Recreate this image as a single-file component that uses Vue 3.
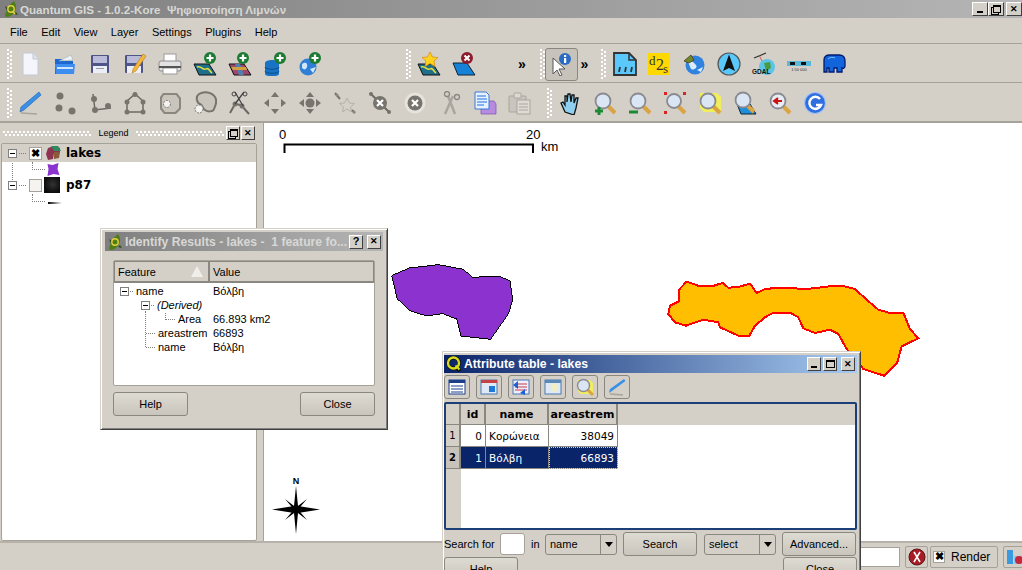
<script setup>
const rows = [
  { n: 1, id: 0, name: "Κορώνεια", area: 38049 },
  { n: 2, id: 1, name: "Βόλβη", area: 66893, selected: true },
];
const menus = ["File", "Edit", "View", "Layer", "Settings", "Plugins", "Help"];
</script>

<template>
  <div class="app">
    <div class="titlebar">
      <svg class="logo" width="16" height="16" viewBox="0 0 16 16">
        <path d="M11 0c2 3 3 6 1 10s-5 6-9 6c-2-2 0-4 1-7s3-6 7-9z" fill="#4f7d18" />
        <path d="M2 5l3 2-1 3zM13 11l2 3-4-1z" fill="#2c4a10" />
        <circle cx="8" cy="8" r="3.200" fill="none" stroke="#e6d23c" stroke-width="1.400" />
        <path d="M9.500 10l2.500 3" stroke="#e6d23c" stroke-width="1.400" />
      </svg>
      <span class="title-text">Quantum GIS - 1.0.2-Kore &nbsp;Ψηφιοποίηση Λιμνών</span>
      <div class="win-btns">
        <button class="win-btn"><i class="min"></i></button>
        <button class="win-btn"><i class="rest"></i></button>
        <button class="win-btn x">✕</button>
      </div>
    </div>

    <div class="menubar">
      <span v-for="m in menus" :key="m" class="menu">{{ m }}</span>
    </div>

    <div class="toolbar">
      <span class="grip"></span>
      <div class="tb"><svg viewBox="0 0 24 24"><path d="M5 1h10l5 6v16H5z" fill="#f4f6fb" stroke="#c2c8d8" /><path d="M15 1v6h5" fill="#dfe3ee" stroke="#c2c8d8" /></svg></div>
      <div class="tb"><svg viewBox="0 0 24 24"><path d="M2 7h7l2 2h9v13H2z" fill="#1e66d0" /><path d="M6 9l12-6 2 5z" fill="#eef2f8" stroke="#8aa" stroke-width=".5" /><path d="M2 12h20l-1 10H3z" fill="#3d8df0" /><rect x="4" y="15" width="16" height="2" fill="#cfe4ff" /></svg></div>
      <div class="tb"><svg viewBox="0 0 24 24"><rect x="3" y="3" width="18" height="18" rx="1" fill="#4f5488" /><rect x="5" y="4" width="14" height="7" fill="#b9bbd8" /><rect x="5" y="14" width="14" height="7" fill="#eceef6" /><rect x="8" y="16" width="8" height="1" fill="#99a" /></svg></div>
      <div class="tb"><svg viewBox="0 0 24 24"><rect x="2" y="3" width="18" height="18" rx="1" fill="#4f5488" /><rect x="4" y="4" width="14" height="7" fill="#b9bbd8" /><rect x="4" y="14" width="14" height="7" fill="#eceef6" /><path d="M10 17L20 2l3 2-10 15-4 2z" fill="#f5b63c" stroke="#a86f10" stroke-width=".5" /></svg></div>
      <div class="tb"><svg viewBox="0 0 24 24"><rect x="6" y="2" width="12" height="8" fill="#fff" stroke="#999" /><rect x="1" y="9" width="22" height="10" rx="2" fill="#e2e2e2" stroke="#8d8d8d" /><rect x="5" y="16" width="14" height="6" fill="#fff" stroke="#999" /><rect x="1" y="14" width="22" height="2" fill="#555" /></svg></div>
      <div class="tb"><svg viewBox="0 0 24 24"><path d="M1 12h15l7 11H6z" fill="#1f6f8b" stroke="#111" /><path d="M4 15c4-2 6 4 9 2s3 2 6 4" fill="none" stroke="#e8e23a" stroke-width="1.500" /><circle cx="17" cy="6" r="6" fill="#1c7a32" /><path d="M17 2.500v7M13.500 6h7" stroke="#fff" stroke-width="2.200" /></svg></div>
      <div class="tb"><svg viewBox="0 0 24 24"><path d="M1 12h15l7 11H6z" fill="#a0466a" stroke="#111" /><path d="M7 12l4 11h5l-4-11z" fill="#4f7fb0" /><path d="M3 15h15l1 3H5z" fill="#d2a03c" /><circle cx="15" cy="6" r="6" fill="#1c7a32" /><path d="M15 2.500v7M11.500 6h7" stroke="#fff" stroke-width="2.200" /></svg></div>
      <div class="tb"><svg viewBox="0 0 24 24"><path d="M2 11c0-4 14-4 14 0v11c0 3-14 3-14 0z" fill="#1873c4" /><path d="M2 15c0 3 14 3 14 0M2 19c0 3 14 3 14 0" fill="none" stroke="#0d4c88" /><circle cx="17" cy="6" r="6" fill="#1c7a32" /><path d="M17 2.500v7M13.500 6h7" stroke="#fff" stroke-width="2.200" /></svg></div>
      <div class="tb"><svg viewBox="0 0 24 24"><circle cx="10" cy="15" r="8.500" fill="#2f7fd6" /><path d="M4 12c4-3 6 0 5 3s-3 3-5 1zM12 17l6-2-3 6z" fill="#cfe6fb" /><circle cx="17" cy="6" r="6" fill="#1c7a32" /><path d="M17 2.500v7M13.500 6h7" stroke="#fff" stroke-width="2.200" /></svg></div>

      <span class="grip g1"></span>
      <div class="tb"><svg viewBox="0 0 24 24"><path d="M1 12h15l7 11H6z" fill="#1f6f8b" stroke="#111" /><path d="M4 15c4-2 6 4 9 2s3 2 6 4" fill="none" stroke="#e8e23a" stroke-width="1.500" /><path d="M13 0l2.500 5 5.500.5-4 3.500 1 5.500-5-3-5 3 1-5.500-4-3.500 5.500-.5z" fill="#ffd21e" stroke="#d9860a" stroke-width=".7" /></svg></div>
      <div class="tb"><svg viewBox="0 0 24 24"><path d="M1 11h14l8 12H6z" fill="#1582d8" stroke="#123" /><circle cx="15" cy="6" r="6" fill="#8c1c2c" /><path d="M12.500 3.500l5 5M17.500 3.500l-5 5" stroke="#fff" stroke-width="2" /></svg></div>
      <span class="more m1">»</span>
      <span class="grip g2"></span>
      <div class="tb active"><svg viewBox="0 0 24 24"><path d="M4 6v16l4-4 3 6 2-1-3-6h6z" fill="#fff" stroke="#555" /><circle cx="16" cy="7" r="6" fill="#2a6cc4" /><rect x="15" y="6" width="2.200" height="5" fill="#fff" /><rect x="15" y="3" width="2.200" height="2" fill="#fff" /></svg></div>
      <span class="more m2">»</span>
      <span class="grip g3"></span>
      <div class="tb"><svg viewBox="0 0 24 24"><path d="M1 1h15l7 7v15H1z" fill="#5ac8fa" stroke="#333" stroke-width="1.800" /><path d="M16 1v7h7" fill="none" stroke="#333" stroke-width="1.500" /><path d="M6 20l1-5M12 20l1-5M18 20l1-5" stroke="#333" stroke-width="1.800" /></svg></div>
      <div class="tb d2s"><span class="d">d</span><span class="two">2</span><span class="s">s</span></div>
      <div class="tb"><svg viewBox="0 0 24 24"><circle cx="13" cy="13" r="9.500" fill="#2f82e0" /><path d="M6 10c4-2 6 1 8 3s-2 6-5 4zM15 18l6-3-2 5z" fill="#d8ecfb" /><path d="M2 9l7-6 3 5-5 3z" fill="#6a8a2c" stroke="#5a3510" stroke-width=".8" /></svg></div>
      <div class="tb"><svg viewBox="0 0 24 24"><circle cx="12" cy="12" r="11" fill="#5ac8fa" stroke="#555" stroke-width="1.200" /><path d="M12 2.500L18 19l-6-3-6 3z" fill="#111" /></svg></div>
      <div class="tb"><svg viewBox="0 0 24 24"><circle cx="15" cy="15" r="8" fill="#5cc4e6" /><path d="M12 11l6-1 1 6-5 3z" fill="#4a9a44" /><path d="M2 6l12-5" stroke="#333" stroke-width="1.300" /><path d="M7 3l3 6" stroke="#c44" stroke-width=".8" /><text x="0" y="22" class="gdal">GDAL</text></svg></div>
      <div class="tb"><svg viewBox="0 0 24 24"><rect x="0" y="9" width="24" height="5" fill="#5cb8d8" /><rect x="3" y="10" width="5" height="3" fill="#111" /><rect x="14" y="10" width="5" height="3" fill="#111" /><text x="12" y="19" class="scale-mini">1:50 000</text></svg></div>
      <div class="tb"><svg viewBox="0 0 24 24"><path d="M2 20V8c0-4 3-5 6-5h9c4 0 6 2 6 6v5c0 2-2 3-3 2v4h-5v-4h-3v4H7v-4H5v4z" fill="#1264dc" stroke="#001a70" stroke-width="1.300" /><path d="M6 7c2-2 5-2 7-1" stroke="#7fc0ff" fill="none" /></svg></div>
    </div>

    <div class="toolbar second">
      <span class="grip"></span>
      <div class="tb"><svg viewBox="0 0 24 24"><path d="M21 1l2 3L6 19l-4 2 1-5z" fill="#3a8fe6" stroke="#1e5fb0" stroke-width=".6" /><path d="M3 22l16 1" stroke="#a8a49c" stroke-width="1.500" /></svg></div>
      <div class="tb dim"><svg viewBox="0 0 24 24"><circle cx="7" cy="5" r="3.500" /><circle cx="6" cy="17" r="3.500" /><circle cx="19" cy="20" r="3.500" /></svg></div>
      <div class="tb dim"><svg viewBox="0 0 24 24"><path d="M5 3l2 16 16-2" fill="none" stroke="#6b6963" stroke-width="1.500" /><circle cx="6" cy="8" r="3" /><circle cx="7" cy="19" r="3" /><circle cx="20" cy="15" r="3" /></svg></div>
      <div class="tb dim"><svg viewBox="0 0 24 24"><path d="M4 10l8-7 8 7v11H4z" fill="none" stroke="#6b6963" stroke-width="1.500" /><circle cx="12" cy="3.500" r="2.500" /><circle cx="4" cy="11" r="2.500" /><circle cx="20" cy="11" r="2.500" /><circle cx="4" cy="21" r="2.500" /><circle cx="20" cy="21" r="2.500" /></svg></div>
      <div class="tb dim"><svg viewBox="0 0 24 24"><path d="M5 2h14l4 5v11l-5 5H6l-4-5V6z" fill="#8a8780" /><path d="M6 4h12l3 4v9l-4 4H7l-3-4V7z" fill="#c9c5bd" /><circle cx="9" cy="13" r="3.500" fill="#f4f2ee" stroke="#777" stroke-dasharray="2 1" /></svg></div>
      <div class="tb dim"><svg viewBox="0 0 24 24"><path d="M6 3c5-3 13-2 16 3s0 9-1 12-6 3-9 1-2-5-5-6-5-7-1-10z" fill="#c9c5bd" stroke="#77746d" stroke-width="2" /><circle cx="6" cy="18" r="4" fill="#f4f2ee" stroke="#777" stroke-dasharray="2 1" /></svg></div>
      <div class="tb dim"><svg viewBox="0 0 24 24"><path d="M2 22l5-9 6 1 8 9" fill="none" stroke="#6b6963" stroke-width="2" /><circle cx="7" cy="13" r="2.500" /><circle cx="14" cy="15" r="2.500" /><path d="M7 1l8 14M16 1l-9 12" stroke="#444" stroke-width="1.300" /><circle cx="6" cy="3" r="2" fill="none" stroke="#444" /><circle cx="17" cy="3" r="2" fill="none" stroke="#444" /></svg></div>
      <div class="tb dim"><svg viewBox="0 0 24 24"><path d="M12 1l4 5H8zM12 23l4-5H8zM1 12l5-4v8zM23 12l-5-4v8z" /></svg></div>
      <div class="tb dim"><svg viewBox="0 0 24 24"><circle cx="12" cy="12" r="4.500" /><path d="M12 1l4 5H8zM12 23l4-5H8zM1 12l5-4v8zM23 12l-5-4v8z" /></svg></div>
      <div class="tb dim faint"><svg viewBox="0 0 24 24"><path d="M14 7l2.500 5 5 .5-4 3.500 1 5-4.500-3-4.500 3 1-5-4-3.500 5-.5z" fill="none" stroke="#b5b1a8" /><path d="M2 2l5 6M19 19l3 3" stroke="#77746d" stroke-width="2" /><circle cx="4" cy="4" r="1.500" /><circle cx="21" cy="21" r="1.500" /></svg></div>
      <div class="tb dim"><svg viewBox="0 0 24 24"><path d="M2 2l20 20" stroke="#6b6963" stroke-width="2" /><circle cx="3" cy="3" r="2" /><circle cx="21" cy="21" r="2" /><circle cx="12" cy="12" r="7" /><path d="M9 9l6 6M15 9l-6 6" stroke="#fff" stroke-width="2.200" /></svg></div>
      <div class="tb dim"><svg viewBox="0 0 24 24"><circle cx="12" cy="12" r="10.500" fill="#e6e3dc" /><circle cx="12" cy="12" r="7.500" /><path d="M9 9l6 6M15 9l-6 6" stroke="#fff" stroke-width="2.200" /></svg></div>
      <div class="tb dim"><svg viewBox="0 0 24 24"><path d="M7 23l8-18M17 23L10 5" stroke="#a9a69f" stroke-width="2.500" /><circle cx="9" cy="3" r="2.500" fill="none" stroke="#8a8780" stroke-width="1.300" /><circle cx="19" cy="6" r="2.500" fill="none" stroke="#8a8780" stroke-width="1.300" /></svg></div>
      <div class="tb"><svg viewBox="0 0 24 24"><path d="M8 10h13l2 3v10H8z" fill="#b78be0" stroke="#7b4fb0" stroke-width=".7" /><path d="M2 1h11l3 3v14H2z" fill="#e8f2ff" stroke="#3a78d0" /><path d="M4 5h9M4 8h10M4 11h10M4 14h7" stroke="#1e6ee0" /></svg></div>
      <div class="tb dim"><svg viewBox="0 0 24 24"><rect x="1" y="5" width="17" height="16" rx="1" fill="#c9c5bd" stroke="#a9a69f" /><rect x="6" y="2" width="7" height="5" rx="1" fill="#dcd9d2" stroke="#a9a69f" /><rect x="9" y="9" width="13" height="14" fill="#dedbd4" stroke="#a9a69f" /><path d="M11 13h9M11 16h9M11 19h9" stroke="#a9a69f" /></svg></div>
      <span class="grip g4"></span>
      <div class="tb"><svg viewBox="0 0 24 24"><path d="M7 21l-4-9 2-1 2 3V5h2v6l1-8h2l1 8 1-7h2l0 8 2-5h2l-2 10-2 7z" fill="#8fd0f0" stroke="#111" stroke-width="1.300" /></svg></div>
      <div class="tb"><svg viewBox="0 0 24 24"><path d="M15 15l7 7" stroke="#d9a441" stroke-width="4" /><circle cx="10" cy="10" r="7.500" fill="#dbe6f4" stroke="#8a8a92" stroke-width="1.800" /><path d="M2 20h8M6 16v8" stroke="#1c8a34" stroke-width="3" /></svg></div>
      <div class="tb"><svg viewBox="0 0 24 24"><path d="M15 15l7 7" stroke="#d9a441" stroke-width="4" /><circle cx="10" cy="10" r="7.500" fill="#dbe6f4" stroke="#8a8a92" stroke-width="1.800" /><path d="M1 21h9" stroke="#1c8a34" stroke-width="3" /></svg></div>
      <div class="tb"><svg viewBox="0 0 24 24"><path d="M15 15l7 7" stroke="#d9a441" stroke-width="4" /><circle cx="11" cy="10" r="7" fill="#dbe6f4" stroke="#8a8a92" stroke-width="1.800" /><path d="M1 1h3v3H1zM20 1h3v3h-3zM1 20h3v3H1z" fill="#d22" /></svg></div>
      <div class="tb"><svg viewBox="0 0 24 24"><path d="M2 2h17l4 4v15H6l-4-4z" fill="#f0ee5c" /><path d="M15 15l7 7" stroke="#d9a441" stroke-width="4" /><circle cx="10" cy="10" r="7.500" fill="#dbe6f4" stroke="#8a8a92" stroke-width="1.800" /></svg></div>
      <div class="tb"><svg viewBox="0 0 24 24"><path d="M4 13h13l6 10H8z" fill="#1f8fdc" stroke="#123" /><path d="M15 15l6 6" stroke="#d9a441" stroke-width="4" /><circle cx="10" cy="9" r="7.500" fill="#dbe6f4" stroke="#8a8a92" stroke-width="1.800" /></svg></div>
      <div class="tb"><svg viewBox="0 0 24 24"><path d="M15 15l7 7" stroke="#d9a441" stroke-width="4" /><circle cx="10" cy="10" r="7.500" fill="#e8ecf4" stroke="#8a8a92" stroke-width="1.800" /><path d="M14 10H8M10 7l-4 3 4 3" fill="#c11" stroke="#c11" stroke-width="2" /></svg></div>
      <div class="tb"><svg viewBox="0 0 24 24"><circle cx="12" cy="12" r="10.500" fill="#2f6fe0" stroke="#a5c2f2" stroke-width="1.200" /><path d="M17 8a6 6 0 1 0 1 6h-5" fill="none" stroke="#fff" stroke-width="2.500" /></svg></div>
    </div>

    <div class="main">
      <aside class="legend">
        <div class="legend-head">
          <span class="hgrip"></span>
          <span class="legend-title">Legend</span>
          <span class="hgrip"></span>
          <button class="win-btn small"><i class="rest"></i></button>
          <button class="win-btn small x">✕</button>
        </div>
        <div class="legend-tree">
          <div class="layer current">
            <i class="expander"></i><i class="dots"></i>
            <span class="check on">✖</span>
            <svg class="layer-icon" width="16" height="16" viewBox="0 0 16 16"><path d="M3 3l6-2 6 2v5H9L8 14 3 15 1 9z" fill="#8e3350" /><path d="M6 1h7l3 5H9z" fill="#2f8a5e" /><path d="M9 7h6l-1 6-5 1z" fill="#8a5a38" /></svg>
            <span class="layer-name">lakes</span>
          </div>
          <div class="sym">
            <i class="elbow"></i>
            <svg width="14" height="13" viewBox="0 0 13 13"><path d="M1 1l5 1 6-2-1 6 2 6-6-1-6 2 1-7z" fill="#8b32cf" /></svg>
          </div>
          <div class="layer">
            <i class="expander"></i><i class="dots"></i>
            <span class="check"></span>
            <span class="raster"></span>
            <span class="layer-name">p87</span>
          </div>
          <div class="sym">
            <i class="elbow"></i>
            <span class="ramp"></span>
          </div>
        </div>
      </aside>
      <div class="splitter"></div>
      <div class="map">
        <svg class="canvas" viewBox="263 124 759 417" width="759" height="417">
          <g transform="translate(380 255) scale(.3333)">
            <path class="lake-a" d="M35 65L88 42 175 32 250 46 278 70 355 66 390 80 398 138 385 180 332 256 243 246 230 195 188 179 140 186 90 170 52 135z" />
          </g>
          <g transform="translate(660 270) scale(.3333)">
            <path class="lake-b" d="M80 38L120 52 155 52 188 42 205 56 235 54 270 44 290 72 315 60 360 56 440 60 510 52 545 50 585 60 620 92 655 122 690 132 730 131 750 180 775 208 725 232 712 280 672 320 610 300 560 240 535 195 510 182 465 192 430 178 415 145 390 131 340 131 315 145 285 170 268 200 235 200 180 175 175 160 130 152 78 170 45 160 25 135 30 110 57 97 57 62z" />
          </g>
          <path d="M284.500 154V145.500H533V154" fill="none" stroke="#000" stroke-width="2" />
          <text x="279" y="140" class="scale-label">0</text>
          <text x="526" y="140" class="scale-label">20</text>
          <text x="541" y="152" class="scale-label">km</text>
          <text x="296" y="485" class="north">N</text>
          <path d="M296 487L298 507 320 510.500 298 514 296 535 294 514 272 510.500 294 507z" fill="#000" />
          <path d="M285 500L296 508.500 307 500 298 510.500 307 521 296 512.500 285 521 294 510.500z" fill="#000" />
          <circle cx="296" cy="510.500" r="3.500" fill="#000" />
        </svg>
      </div>
    </div>

    <div class="statusbar">
      <span class="coord-input"></span>
      <button class="stat-btn stop"><svg width="18" height="18" viewBox="0 0 18 18"><circle cx="9" cy="9" r="8" fill="#a81c24" stroke="#5c1014" /><path d="M6 4l6 10M12 4L6 14" stroke="#fff" stroke-width="1.600" /></svg></button>
      <div class="render"><span class="check on small-check">✖</span><span>Render</span></div>
      <button class="stat-btn last"><svg width="18" height="18" viewBox="0 0 18 18"><path d="M1 2h6v14H1z" fill="#3a9ae0" /><path d="M8 8h8v8H8z" fill="#8ec4f0" /><circle cx="13" cy="12" r="4" fill="#c8283c" /></svg></button>
    </div>

    <!-- floating windows -->
    <section class="dialog identify">
      <header class="dlg-title inactive">
        <svg width="16" height="16" viewBox="0 0 16 16"><path d="M11 0c2 3 3 6 1 10s-5 6-9 6c-2-2 0-4 1-7s3-6 7-9z" fill="#4f7d18" /><path d="M2 5l3 2-1 3zM13 11l2 3-4-1z" fill="#2c4a10" /><circle cx="8" cy="8" r="3.200" fill="none" stroke="#e6d23c" stroke-width="1.400" /></svg>
        <span class="dlg-text">Identify Results - lakes - &nbsp;1 feature fo...</span>
        <button class="win-btn small q">?</button>
        <button class="win-btn small x gap">✕</button>
      </header>
      <div class="id-body">
        <div class="id-tree">
          <div class="id-head">
            <span class="col-f">Feature<i class="sort"></i></span>
            <span class="col-v">Value</span>
          </div>
          <i class="vline"></i>
          <div class="id-row"><span class="k lv0"><i class="expander"></i><i class="dots short"></i>name</span><span>Βόλβη</span></div>
          <div class="id-row"><span class="k lv1"><i class="expander"></i><i class="dots short"></i><em>(Derived)</em></span></div>
          <div class="id-row"><span class="k lv2"><i class="elbow small-elbow"></i>Area</span><span>66.893 km2</span></div>
          <div class="id-row"><span class="k lv3"><i class="dots branch"></i>areastrem</span><span>66893</span></div>
          <div class="id-row"><span class="k lv3"><i class="dots branch"></i>name</span><span>Βόλβη</span></div>
        </div>
        <div class="id-actions">
          <button class="qbtn">Help</button>
          <button class="qbtn">Close</button>
        </div>
      </div>
    </section>

    <section class="dialog attrs">
      <header class="dlg-title active">
        <svg width="16" height="16" viewBox="0 0 16 16"><path d="M10 11l4 4" stroke="#111" stroke-width="4" /><circle cx="7.500" cy="7" r="5.500" fill="none" stroke="#111" stroke-width="4" /><circle cx="7.500" cy="7" r="5.500" fill="none" stroke="#d8dc1e" stroke-width="2.400" /><path d="M9.500 9.500l4 4" stroke="#d8dc1e" stroke-width="2" /></svg>
        <span class="dlg-text">Attribute table - lakes</span>
        <button class="win-btn small"><i class="min"></i></button>
        <button class="win-btn small"><i class="max"></i></button>
        <button class="win-btn small x gap">✕</button>
      </header>
      <div class="attr-tools">
        <button class="tool"><svg viewBox="0 0 18 18"><rect x="1" y="2" width="16" height="14" fill="#fff" stroke="#1a3f8a" /><rect x="1" y="2" width="16" height="3" fill="#1a3f8a" /><path d="M3 8h12M3 11h12M3 14h12" stroke="#1a3f8a" /></svg></button>
        <button class="tool"><svg viewBox="0 0 18 18"><rect x="1" y="2" width="16" height="14" fill="#dfe9f6" stroke="#4a78b0" /><rect x="1" y="2" width="16" height="3" fill="#c84040" /><path d="M9 8h6v6H9z" fill="#1e78d8" /></svg></button>
        <button class="tool"><svg viewBox="0 0 18 18"><rect x="1" y="2" width="16" height="14" fill="#eef" stroke="#4a78b0" /><path d="M3 6h12M3 9h12M3 12h12" stroke="#c84040" /><path d="M1 7l5-4v8zM8 15l5-4v6z" fill="#1e60d8" /></svg></button>
        <button class="tool"><svg viewBox="0 0 18 18"><rect x="1" y="2" width="16" height="14" fill="#dfe9f6" stroke="#4a78b0" /><rect x="1" y="2" width="16" height="3" fill="#5a88b8" /><path d="M8 5l6 2-2 8-5-4z" fill="#f2eec0" /></svg></button>
        <button class="tool"><svg viewBox="0 0 18 18"><path d="M2 2h12l3 3v11H5l-3-3z" fill="#f0ee5c" /><path d="M11 11l6 6" stroke="#d9a441" stroke-width="3" /><circle cx="7.500" cy="7.500" r="6" fill="#dbe6f4" stroke="#8a8a92" stroke-width="1.400" /></svg></button>
        <button class="tool"><svg viewBox="0 0 18 18"><path d="M16 1l1.500 2L4 13l-3 2 1-4z" fill="#3a8fe6" /><path d="M2 16l13 1" stroke="#a8a49c" stroke-width="1.300" /></svg></button>
      </div>
      <div class="attr-table">
        <div class="attr-head">
          <span class="h corner"></span><span class="h cid">id</span><span class="h cname">name</span><span class="h carea">areastrem</span>
        </div>
        <div v-for="r in rows" :key="r.n" class="attr-row" :class="{ selected: r.selected }">
          <span class="h rownum">{{ r.n }}</span>
          <span class="cell cid num">{{ r.id }}</span>
          <span class="cell cname">{{ r.name }}</span>
          <span class="cell carea num" :class="{ focus: r.selected }">{{ r.area }}</span>
        </div>
      </div>
      <div class="attr-search">
        <span class="lbl for">Search for</span>
        <span class="field"></span>
        <span class="lbl in">in</span>
        <span class="combo"><span>name</span><i></i></span>
        <button class="qbtn search">Search</button>
        <span class="combo sel"><span>select</span><i></i></span>
        <button class="qbtn adv">Advanced...</button>
      </div>
      <div class="attr-actions">
        <button class="qbtn wide">Help</button>
        <button class="qbtn wide">Close</button>
      </div>
    </section>
  </div>
</template>

<style>
html, body { margin: 0; overflow: hidden; }
</style>

<style scoped>
.app {
  position: relative;
  width: 1022px;
  height: 570px;
  overflow: hidden;
  display: flex;
  flex-direction: column;
  background: #d4d0c8;
  font-family: "Liberation Sans", sans-serif;
  font-size: 11px;
  color: #000;
}
button { font-family: inherit; margin: 0; padding: 0; }

.titlebar {
  height: 18px;
  display: flex;
  align-items: center;
  padding: 0 0 0 3px;
  background: linear-gradient(90deg, #7f7f7f, #b5b5b5);
  flex: none;
}
.logo { margin-right: 1px; }
.title-text {
  flex: 1;
  font: bold 11.600px "Liberation Sans", sans-serif;
  color: #d8d8d4;
  white-space: nowrap;
}
.win-btns { display: flex; }
.win-btn {
  width: 16px;
  height: 14px;
  display: flex;
  align-items: center;
  justify-content: center;
  background: #d4d0c8;
  border: 1px solid;
  border-color: #fff #404040 #404040 #fff;
  font-size: 9px;
  font-weight: bold;
  line-height: 1;
  color: #000;
}
.win-btn.x { margin-left: 2px; }
.win-btn .min { width: 6px; height: 2px; background: #000; margin-top: 6px; margin-right: 1px; }
.win-btn .rest {
  width: 8px; height: 8px;
  box-sizing: border-box;
  border: 1px solid #000; border-top-width: 2px;
  box-shadow: -2px 2px 0 -1px #d4d0c8, -2px 2px 0 0 #000;
  margin: -1px 0 0 2px;
}
.win-btn .max { width: 9px; height: 8px; box-sizing: border-box; border: 1px solid #000; border-top-width: 2px; }

.menubar {
  height: 26px;
  flex: none;
  display: flex;
  align-items: center;
  gap: 13.500px;
  padding: 2px 0 0 10px;
  border-bottom: 1px solid #a5a29a;
  box-sizing: border-box;
}

.toolbar {
  height: 39px;
  flex: none;
  box-sizing: border-box;
  display: flex;
  align-items: center;
  padding: 2px 0 0 7px;
  border-bottom: 1px solid #a5a29a;
}
.toolbar.second { border-bottom: 2px solid #a5a29a; height: 40px; }
.grip {
  width: 5px;
  height: 30px;
  flex: none;
  background-image:
    linear-gradient(#fff 2px, transparent 2px),
    linear-gradient(#fff 2px, transparent 2px);
  background-size: 2px 4px, 2px 4px;
  background-position: 0 0, 3px 2px;
  background-repeat: repeat-y;
}
.tb {
  width: 35px;
  height: 33px;
  flex: none;
  display: flex;
  align-items: center;
  justify-content: center;
  box-sizing: border-box;
}
.tb svg { width: 24px; height: 24px; }
.dim svg { fill: #77746d; }
.faint svg { fill: #8a8780; }
.g1 { margin-left: 79px; }
.more { font-weight: bold; font-size: 14px; flex: none; text-align: center; }
.m1 { margin-left: 34px; width: 14px; }
.g2 { margin-left: 10.500px; }
.tb.active {
  width: 33px;
  background: #c7c3bb;
  border: 1px solid #8a8780;
  border-radius: 3px;
}
.m2 { width: 14px; }
.g3 { margin-left: 9px; margin-right: 1.500px; }
.d2s {
  position: relative;
  width: 22px;
  height: 22px;
  margin: 0 6px;
  background: #ffd800;
  font-family: "Liberation Serif", serif;
  color: #333;
}
.d2s .d { position: absolute; left: 1px; top: 0; font-size: 13px; }
.d2s .two { position: absolute; left: 8px; top: 3px; font-size: 16px; }
.d2s .s { position: absolute; left: 15px; top: 8px; font-size: 13px; }
.gdal { font: bold 6.500px "Liberation Sans", sans-serif; fill: #111; }
.scale-mini { font: 4px "Liberation Sans", sans-serif; fill: #333; text-anchor: middle; }
.g4 { margin-left: 10px; margin-right: 0; }

.main { flex: 1; display: flex; min-height: 0; }
.legend { width: 258px; flex: none; display: flex; flex-direction: column; }
.legend-head {
  height: 20px;
  flex: none;
  display: flex;
  align-items: center;
  padding: 0 3px;
}
.hgrip {
  flex: 1;
  height: 5px;
  background-image:
    linear-gradient(90deg, #fff 2px, transparent 2px),
    linear-gradient(90deg, #fff 2px, transparent 2px);
  background-size: 4px 2px, 4px 2px;
  background-position: 0 0, 2px 3px;
  background-repeat: repeat-x;
}
.legend-title { padding: 0 7px; font-size: 9px; }
.legend-title + .hgrip { margin-right: 2px; }
.win-btn.small { width: 14px; height: 14px; }
.win-btn.small.x { margin-left: 1px; }
.legend-tree {
  flex: 1;
  position: relative;
  margin: 0 1px;
  background: #fff;
  border: 1px solid #a5a29a;
  border-radius: 2px;
}
.legend-tree::before {
  content: "";
  position: absolute;
  left: 10px;
  top: 0;
  height: 38px;
  border-left: 1px dotted #808080;
}
.layer {
  height: 18px;
  display: flex;
  align-items: center;
  padding-left: 6px;
  position: relative;
}
.layer.current { background: #d4d0c8; }
.expander {
  width: 9px;
  height: 9px;
  box-sizing: border-box;
  border: 1px solid #808080;
  flex: none;
  display: inline-block;
  position: relative;
  background: #fff;
  z-index: 1;
}
.expander::after {
  content: "";
  position: absolute;
  left: 1px; right: 1px; top: 3px;
  height: 1px;
  background: #000;
}
.dots {
  width: 7px;
  border-top: 1px dotted #808080;
  margin: 0 3px 0 2px;
  flex: none;
}
.check {
  width: 13px;
  height: 13px;
  flex: none;
  box-sizing: border-box;
  border: 1px solid #a5a29a;
  background: #f4f3f0;
  margin-right: 4px;
  display: flex;
  align-items: center;
  justify-content: center;
  font-size: 11px;
  line-height: 1;
  font-weight: bold;
}
.check.on { background: #fff; color: #000; }
.layer-icon { margin-left: -1px; }
.layer-name { font: bold 12px "DejaVu Sans", sans-serif; margin-left: 5px; }
.raster {
  width: 16px;
  height: 16px;
  background: radial-gradient(circle at 55% 45%, #333, #0c0c0c 70%);
  flex: none;
  margin: 0 1px 0 -2px;
}
.sym {
  height: 14px;
  display: flex;
  align-items: center;
  padding-left: 30px;
  position: relative;
}
.elbow {
  width: 12px;
  height: 7px;
  margin-top: -6px;
  border-left: 1px dotted #808080;
  border-bottom: 1px dotted #808080;
  flex: none;
  margin-right: 1px;
}
.ramp { width: 14px; height: 2px; margin: 3px 0 0 2px; background: linear-gradient(90deg, #000, #fff); }

.splitter { width: 5px; flex: none; }
.map {
  flex: 1;
  background: #fff;
  border-left: 1px solid #a5a29a;
  overflow: hidden;
  min-width: 0;
}
.canvas { display: block; margin-left: -1px; }
.lake-a { fill: #8b32cf; stroke: #000; stroke-width: 3; shape-rendering: crispEdges; }
.lake-b { fill: #ffbf00; stroke: #f00; stroke-width: 6; shape-rendering: crispEdges; }
.scale-label { font: 13px "Liberation Sans", sans-serif; fill: #000; }
.north { font: bold 9px "Liberation Sans", sans-serif; text-anchor: middle; fill: #000; }

.statusbar {
  height: 29px;
  flex: none;
  box-sizing: border-box;
  border-top: 2px solid #b6b2a9;
  display: flex;
  align-items: center;
  justify-content: flex-end;
}
.coord-input {
  width: 40px;
  height: 20px;
  background: #fff;
  border: 1px solid #a5a29a;
  box-sizing: border-box;
  margin-right: 5px;
}
.stat-btn {
  width: 23px;
  height: 22px;
  border: 1px solid #a5a29a;
  border-radius: 2px;
  background: #d4d0c8;
  display: flex;
  align-items: center;
  justify-content: center;
}
.render {
  width: 68px;
  height: 22px;
  margin: 0 5px 0 2px;
  display: flex;
  align-items: center;
  gap: 6px;
  padding-left: 2px;
  box-sizing: border-box;
  border: 1px solid #a5a29a;
  border-radius: 2px;
  font-size: 12px;
}
.small-check { margin-right: 0; width: 12px; height: 12px; }
.stat-btn.last { margin-right: -4px; }

.dialog {
  position: absolute;
  background: #d4d0c8;
  box-sizing: border-box;
  border: 1px solid;
  border-color: #d4d0c8 #404040 #404040 #d4d0c8;
  box-shadow: inset 1px 1px 0 #fff, inset -1px -1px 0 #808080;
  padding: 3px 4px;
  display: flex;
  flex-direction: column;
}
.dlg-title {
  height: 19px;
  flex: none;
  display: flex;
  align-items: center;
  padding: 0 2px;
  gap: 2px;
}
.dlg-title.inactive { background: linear-gradient(90deg, #7f7f7f, #b5b5b5); }
.dlg-title.active { background: linear-gradient(90deg, #0a246a, #a6caf0); }
.dlg-text {
  flex: 1;
  font: bold 12.200px "Liberation Sans", sans-serif;
  white-space: nowrap;
  overflow: hidden;
  color: #fff;
}
.inactive .dlg-text { color: #d8d8d4; }
.win-btn.q { font-size: 11px; }
.win-btn.x.gap { margin-left: 2px; }

.identify { left: 100px; top: 228px; width: 288px; height: 202px; }
.id-body {
  flex: 1;
  display: flex;
  flex-direction: column;
  padding: 9px 8px 9px;
  gap: 6px;
}
.id-tree {
  height: 126px;
  flex: none;
  position: relative;
  box-sizing: border-box;
  background: #fff;
  border: 1px solid #a5a29a;
  border-radius: 2px;
}
.vline {
  position: absolute;
  left: 31px;
  top: 50px;
  height: 36px;
  border-left: 1px dotted #808080;
}
.id-head {
  height: 22px;
  display: flex;
  background: #d4d0c8;
  border-bottom: 1px solid #fff;
}
.col-f, .col-v {
  display: flex;
  align-items: center;
  padding-left: 3px;
  box-sizing: border-box;
  border: 1px solid #8a8780;
  border-bottom-width: 2px;
}
.col-f { width: 95px; justify-content: space-between; }
.col-v { flex: 1; }
.sort {
  width: 0; height: 0;
  border-left: 6px solid transparent;
  border-right: 6px solid transparent;
  border-bottom: 11px solid #f0eee9;
  margin-right: 5px;
}
.id-row { height: 14px; display: flex; align-items: center; line-height: 14px; }
.k { width: 99px; flex: none; display: flex; align-items: center; box-sizing: border-box; }
.k .dots { margin: 0 3px 0 1px; width: 3px; }
.k .dots.branch { width: 9px; margin: 0 3px 0 0; }
.lv0 { padding-left: 6px; }
.lv1 { padding-left: 27px; }
.lv2 { padding-left: 51px; }
.lv3 { padding-left: 32px; }
.small-elbow { width: 9px; height: 6px; margin-right: 3px; }

.qbtn {
  background: linear-gradient(#dedbd3, #c9c5bd);
  border: 1px solid #8a8780;
  border-radius: 3px;
  font-size: 11px;
  height: 24px;
  color: #000;
  width: 75px;
}
.id-actions { display: flex; justify-content: space-between; }

.attrs { left: 442px; top: 351px; width: 419px; height: 240px; padding: 3px 3px 0 1px; }
.attrs .dlg-title { height: 18px; }
.attr-tools { display: flex; gap: 6px; padding: 2px 0 0 0; height: 24px; flex: none; margin-bottom: 3px; box-sizing: content-box; }
.tool {
  width: 26px;
  height: 24px;
  background: #d4d0c8;
  border: 1px solid #8a8780;
  border-radius: 3px;
  display: flex;
  align-items: center;
  justify-content: center;
}
.tool svg { width: 18px; height: 18px; }
.attr-table {
  height: 128px;
  flex: none;
  box-sizing: border-box;
  border: 2px solid #1c3f78;
  border-radius: 2px;
  background: linear-gradient(90deg, #d4d0c8 15px, #fff 15px);
  position: relative;
}
.attr-head {
  height: 21px;
  display: flex;
  background: #d4d0c8;
}
.h {
  box-sizing: border-box;
  display: flex;
  align-items: center;
  justify-content: center;
  border-right: 2px solid #8a8780;
  border-bottom: 1px solid #8a8780;
  font-weight: bold;
  font-family: "DejaVu Sans", sans-serif;
  flex: none;
}
.corner, .rownum { width: 15px; }
.cid { width: 25px; flex: none; }
.cname { width: 63px; flex: none; }
.carea { width: 69px; flex: none; }
.attr-row { height: 22px; display: flex; }
.cell {
  box-sizing: border-box;
  display: flex;
  align-items: center;
  padding: 0 3px;
  background: #fff;
  border-right: 1px solid #8a8780;
  border-bottom: 1px solid #8a8780;
  font-family: "DejaVu Sans", sans-serif;
  font-size: 10.500px;
}
.num { justify-content: flex-end; }
.selected .cell { background: #0a246a; color: #fff; }
.selected .rownum { background: #c7c3bb; font-weight: bold; }
.rownum { font-size: 10px; font-weight: normal; }
.focus { outline: 1px dotted #ffd84a; outline-offset: -1px; }

.attr-search {
  display: flex;
  align-items: center;
  height: 24px;
  flex: none;
  margin-top: 2px;
}
.lbl { flex: none; }
.for { width: 50px; white-space: nowrap; }
.field { width: 25px; height: 22px; background: #fff; border: 1px solid #a5a29a; border-radius: 3px; box-sizing: border-box; margin-left: 6px; }
.in { margin: 0 7px 0 6px; width: 7px; }
.combo {
  width: 72px;
  height: 21px;
  box-sizing: border-box;
  border: 1px solid #8a8780;
  border-radius: 3px;
  display: flex;
  align-items: center;
  justify-content: space-between;
  padding-left: 4px;
  flex: none;
}
.combo i {
  width: 16px;
  height: 19px;
  box-sizing: border-box;
  border-left: 1px solid #8a8780;
  position: relative;
}
.combo i::after {
  content: "";
  position: absolute;
  left: 4px;
  top: 7px;
  border-left: 4px solid transparent;
  border-right: 4px solid transparent;
  border-top: 5px solid #000;
}
.search { margin: 0 7px 0 6px; flex: none; width: 74px; }
.adv { margin-left: 6px; flex: none; width: 74px; }
.attr-actions { display: flex; justify-content: space-between; margin-top: 1px; flex: none; }
.wide { width: 74px; }
</style>
